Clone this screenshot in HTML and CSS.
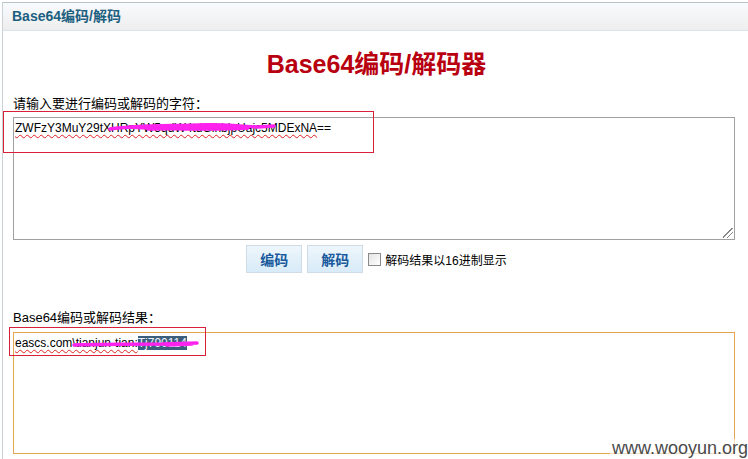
FILE: index.html
```html
<!DOCTYPE html>
<html>
<head>
<meta charset="utf-8">
<link rel="stylesheet" href="styles.css">
</head>
<body>
<div class="panel">
  <div class="panel-head">Base64编码/解码</div>
  <div class="panel-body">
    <h1 class="title">Base64编码/解码器</h1>
    <div class="label">请输入要进行编码或解码的字符：</div>
    <div class="textbox input-box">
      <span class="spell">ZWFzY3MuY29tXHRpYW5qdW4tdGlhbjpUajc5MDExNA</span>==
      <span class="grip"></span>
    </div>
    <div class="actions">
      <button class="btn">编码</button>
      <button class="btn">解码</button>
      <label class="check"><span class="box"></span>解码结果以16进制显示</label>
    </div>
    <div class="label label2">Base64编码或解码结果：</div>
    <div class="textbox output-box"><span class="spell">eascs.com\tianjun-tian:</span><span class="sel">Tj790114</span></div>
  </div>
</div>
<div class="mark mark1"></div>
<div class="mark mark2"></div>
<svg class="scribble s1" width="170" height="14" viewBox="0 0 170 14">
  <path d="M2 9 C30 5 60 6 90 5 C110 4 130 6 150 7 L166 6 M20 7 C60 9 100 10 140 8 M70 8 L130 7 M40 9 L100 8" stroke="#ff22ee" stroke-width="3.5" fill="none" stroke-linecap="round"/>
</svg>
<svg class="scribble s2" width="130" height="10" viewBox="0 0 130 10">
  <path d="M2 6 C30 5 60 5 90 5 L125 4 M95 6 L120 5" stroke="#ff22ee" stroke-width="3.5" fill="none" stroke-linecap="round"/>
</svg>
<div class="watermark">www.wooyun.org</div>
</body>
</html>
```
FILE: styles.css
```css
body {
  margin: 0;
  background: #fff;
  font-family: "Liberation Sans", "Noto Sans CJK SC", sans-serif;
  font-size: 12px;
  color: #000;
  width: 748px;
  height: 459px;
  overflow: hidden;
  position: relative;
}
.panel {
  margin: 2px 0 0 2px;
  border-top: 1px solid #b9c4c8;
  border-left: 1px solid #c9d2d6;
  height: 470px;
}
.panel-head {
  height: 27px;
  line-height: 27px;
  padding-left: 9px;
  background: linear-gradient(#f9fafb, #f3f4f5 50%, #eeeeee);
  border-bottom: 1px solid #dbe4ec;
  font-weight: bold;
  font-size: 14px;
  color: #1c5f80;
}
.panel-body {
  padding-left: 10px;
}
.title {
  margin: 18px 0 0 0;
  text-align: center;
  font-size: 25px;
  line-height: 30px;
  font-weight: bold;
  color: #b80010;
  padding-right: 8px;
}
.label {
  margin-top: 17px;
  font-size: 13px;
  line-height: 16px;
}
.textbox {
  width: 718px;
  border: 1px solid #a0a0a0;
  padding: 3px 1px;
  font-size: 12px;
  line-height: 15px;
  position: relative;
}
.input-box {
  margin-top: 5px;
  height: 115px;
}
.spell {
  text-decoration: underline wavy #e02020;
  text-decoration-thickness: 1px;
  text-underline-offset: 2px;
}
.sel {
  background: #3d5d7c;
  color: #e8f4ff;
}
.grip {
  position: absolute;
  right: 1px;
  bottom: 1px;
  width: 10px;
  height: 10px;
  background: linear-gradient(135deg, transparent 45%, #888 45%, #888 52%, transparent 52%, transparent 68%, #888 68%, #888 75%, transparent 75%);
}
.actions {
  display: flex;
  justify-content: center;
  align-items: center;
  gap: 5px;
  margin-top: 4px;
  height: 30px;
  padding-right: 8px;
}
.btn {
  width: 56px;
  height: 28px;
  border: 1px solid #cfdce6;
  background: linear-gradient(#eef6fc, #d8ebf8);
  font-family: "Liberation Sans", "Noto Sans CJK SC", sans-serif;
  font-weight: bold;
  font-size: 14px;
  color: #1a5a9c;
  padding: 0;
}
.check {
  display: flex;
  align-items: center;
  gap: 4px;
  font-size: 12px;
}
.box {
  width: 11px;
  height: 11px;
  border: 1px solid #8a8a8a;
  background: linear-gradient(135deg, #e4e4e4, #ffffff);
}
.label2 {
  margin-top: 36px;
}
.output-box {
  margin-top: 6px;
  height: 114px;
  border-color: #e4a652;
}
.mark {
  position: absolute;
  border: 1px solid #d8203a;
}
.mark1 {
  left: 3px;
  top: 111px;
  width: 369px;
  height: 40px;
}
.mark2 {
  left: 9px;
  top: 327px;
  width: 195px;
  height: 27px;
}
.scribble {
  position: absolute;
}
.s1 {
  left: 108px;
  top: 120px;
}
.s2 {
  left: 72px;
  top: 339px;
}
.watermark {
  position: absolute;
  right: 0;
  bottom: 1px;
  font-size: 18px;
  line-height: 19px;
  color: #4a4a4a;
  background: rgba(255,255,255,0.6);
  padding-left: 2px;
  text-shadow: 0 0 2px #fff;
}
```
